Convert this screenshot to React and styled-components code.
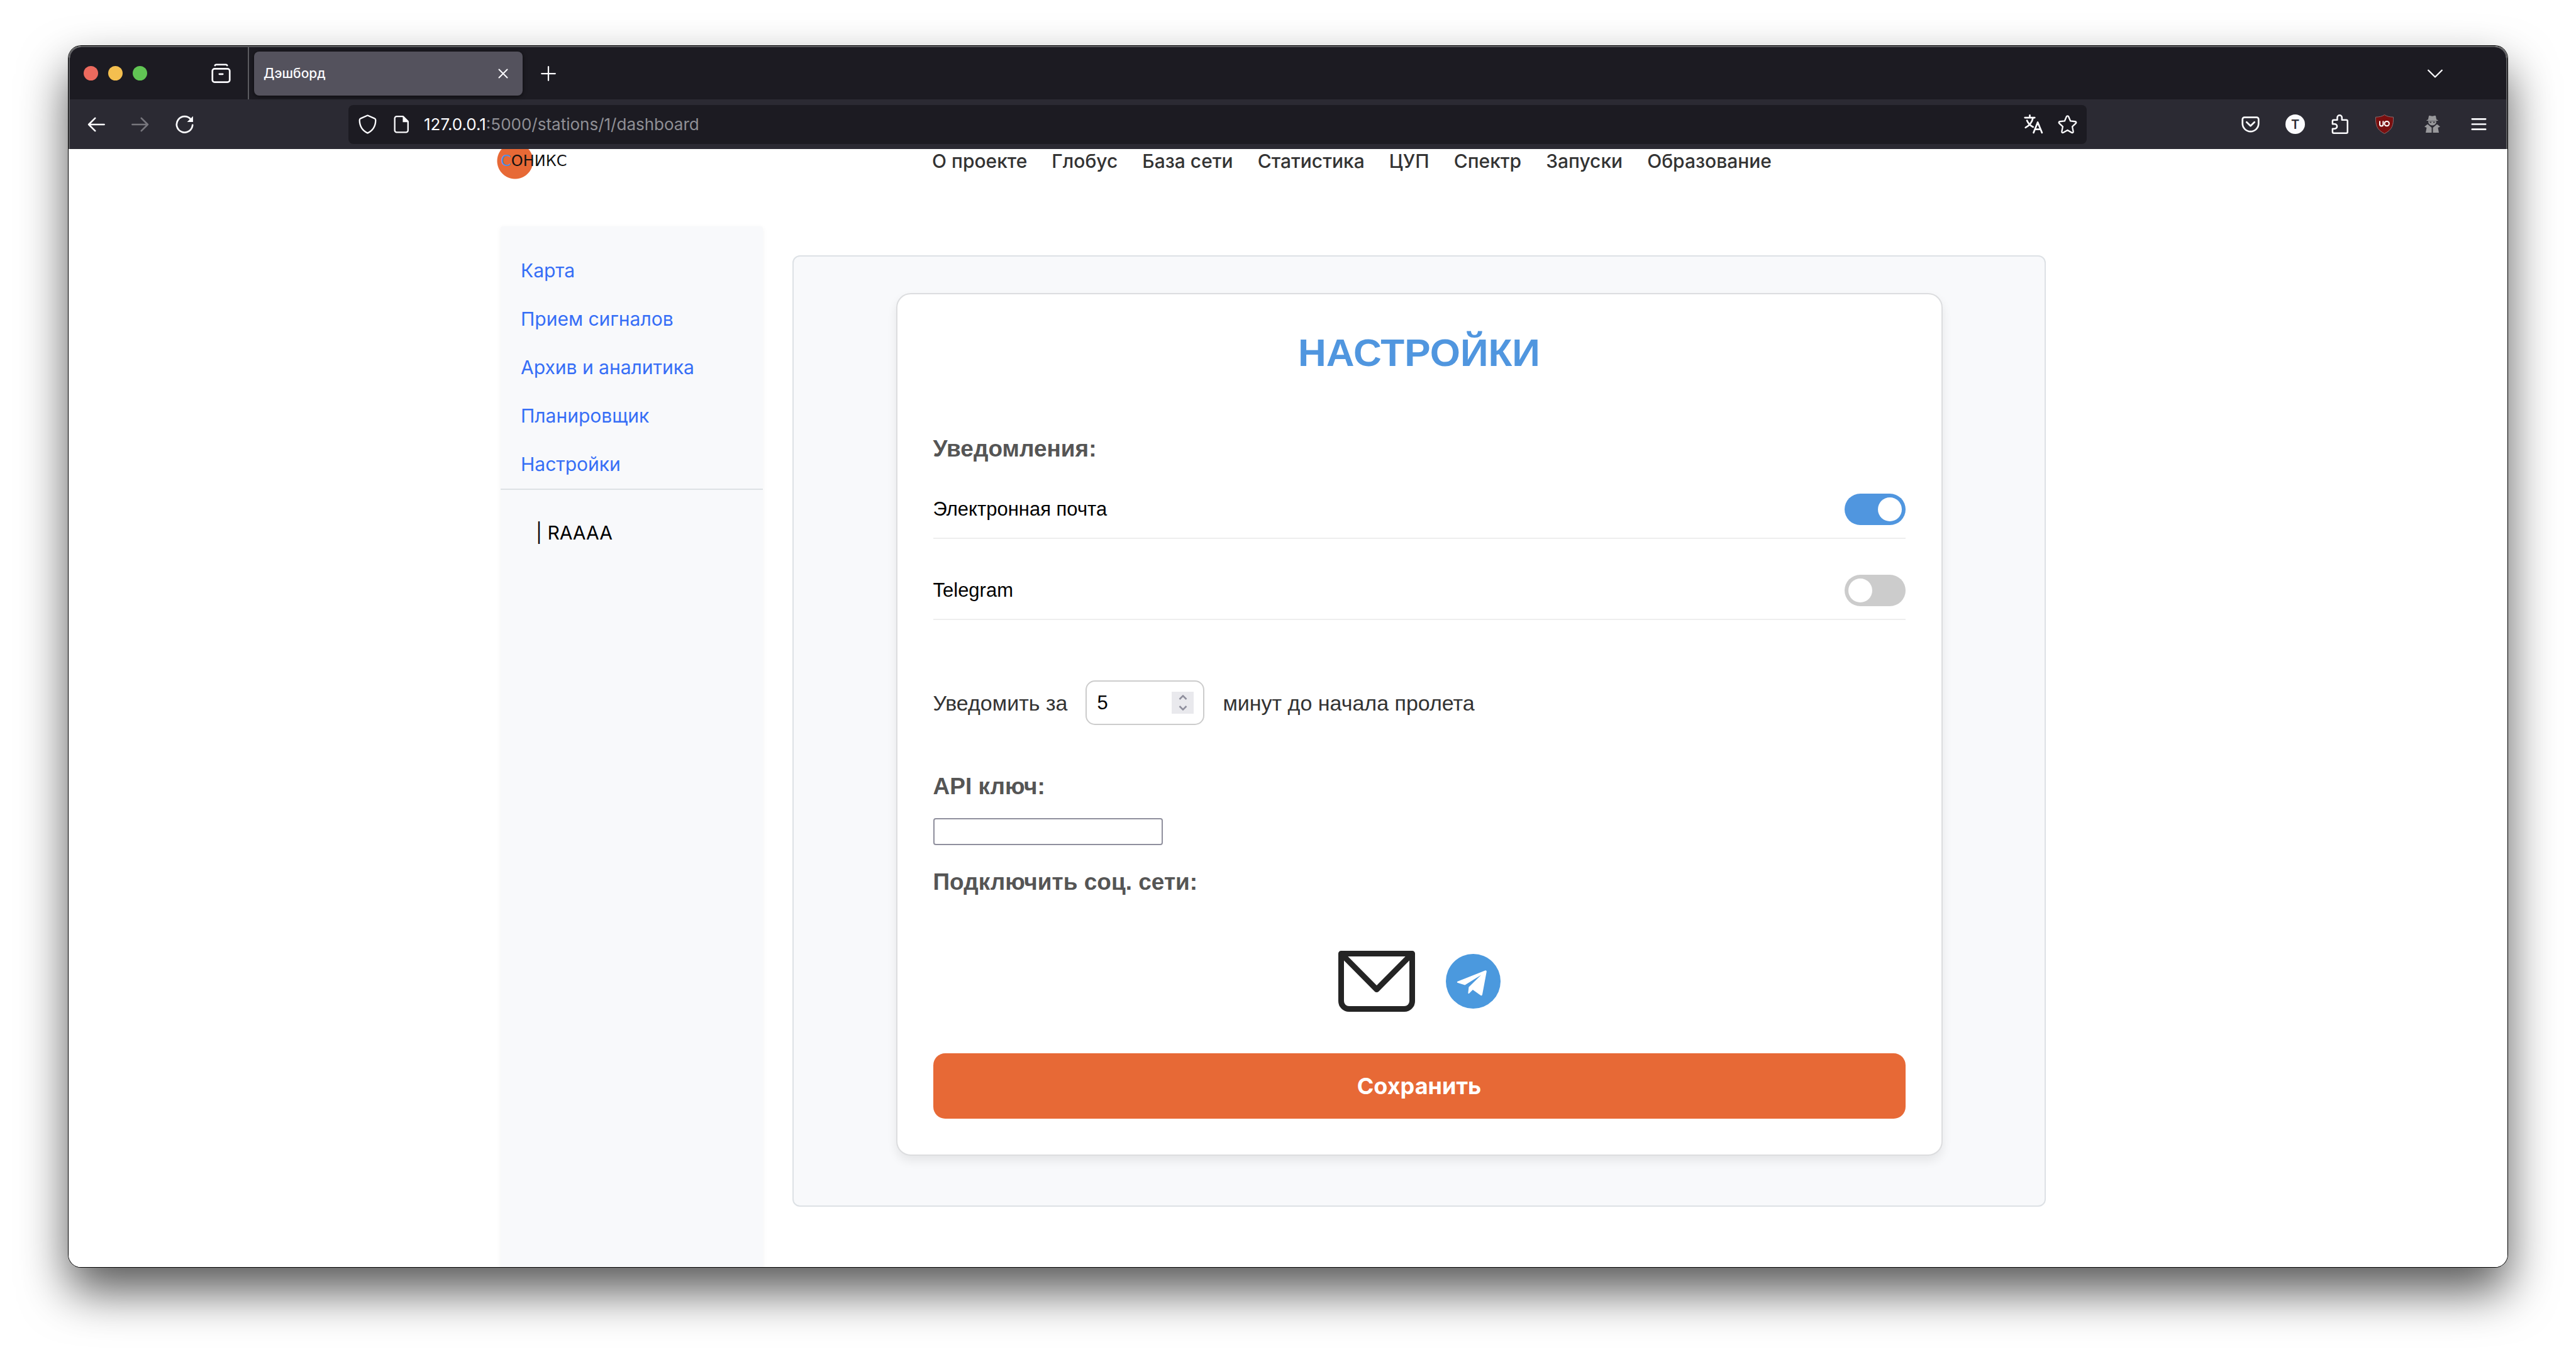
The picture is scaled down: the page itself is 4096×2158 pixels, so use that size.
import React, { useState } from "react";
import styled, { createGlobalStyle } from "styled-components";

const ui = '"Inter", "Roboto", sans-serif';
const arial = '"Liberation Sans", Arial, sans-serif';

const GlobalStyle = createGlobalStyle`
  *, *::before, *::after { box-sizing: border-box; }
  html, body { margin: 0; background: #fff; }
  body { font-family: ${ui}; }
  button { border: 0; padding: 0; margin: 0; background: none; color: inherit; font: inherit; cursor: pointer; }
  svg { display: block; flex: none; }
  h1, h2, p, ul { margin: 0; padding: 0; }
`;

/* ---------- Desktop and browser window ---------- */

const Desktop = styled.div`
  display: flex;
  height: 100vh;
  padding: 73px 109px 143px;
  overflow: hidden;
`;

const BrowserWindow = styled.div`
  flex: 1;
  display: flex;
  flex-direction: column;
  min-width: 0;
  border-radius: 20px;
  overflow: hidden;
  background: #fff;
  box-shadow: 0 0 0 1px #000, 0 38px 76px rgba(0, 0, 0, 0.66);
`;

const Chrome = styled.header`
  flex: none;
  border: 2px solid #5d5d60;
  border-bottom: 0;
  border-radius: 20px 20px 0 0;
  overflow: hidden;
  color: #fbfbfe;
`;

const TabStrip = styled.div`
  display: flex;
  align-items: center;
  height: 83px;
  padding: 0 101px 0 22px;
  background: #1c1b22;
`;

const Lights = styled.div`
  display: flex;
  gap: 16px;
  margin-right: 102px;
`;

const Light = styled.button`
  width: 23px;
  height: 23px;
  border-radius: 50%;
  background: ${(p) => p.$color};
`;

const Separator = styled.span`
  align-self: stretch;
  width: 2px;
  margin: 0 8px 0 27px;
  background: #5b5b60;
`;

const Tab = styled.div`
  display: flex;
  align-items: center;
  justify-content: space-between;
  width: 427px;
  height: 70px;
  margin-right: 29px;
  padding: 0 23px 0 15px;
  border-radius: 8px;
  background: #54525d;
  box-shadow: 0 1px 6px rgba(0, 0, 0, 0.6);
  font-size: 21px;
  font-weight: 500;
  line-height: 28px;
`;

const Spacer = styled.span`
  flex: 1;
`;

const Toolbar = styled.div`
  display: flex;
  align-items: center;
  height: 79px;
  padding: 0 28px;
  background: #2b2a33;
`;

const IconRow = styled.div`
  display: flex;
  align-items: center;
  gap: ${(p) => p.$gap}px;
  margin-left: ${(p) => p.$before || 0}px;
`;

const IconButton = styled.button`
  color: ${(p) => (p.$muted ? "#77767d" : "#fbfbfe")};
`;

const AddressBar = styled.div`
  flex: 1;
  display: flex;
  align-items: center;
  height: 62px;
  margin: 0 0 0 246px;
  padding: 0 15px;
  border-radius: 8px;
  background: #1c1b22;
`;

const Address = styled.span`
  flex: 1;
  margin-left: 20px;
  font-size: 26px;
  line-height: 40px;
  color: #8f8f95;
`;

const Host = styled.span`
  color: #fbfbfe;
`;

/* ---------- Site ---------- */

const Page = styled.div`
  flex: 1;
  display: flex;
  flex-direction: column;
  min-height: 0;
  overflow: hidden;
  background: #fff;
`;

const SiteHeader = styled.div`
  flex: none;
  display: flex;
  align-items: center;
  width: 100%;
  max-width: 2516px;
  height: 58px;
  margin: -10px auto 75px;
`;

const Logo = styled.a`
  display: flex;
  align-items: center;
  width: 692px;
  height: 58px;
  padding-left: 6px;
  background: radial-gradient(circle 29px at 29px 29px, #e76936 28px, transparent 29px);
  color: #111;
  font: 24px/28px "DejaVu Sans", sans-serif;
  text-decoration: none;
`;

const LogoAccent = styled.span`
  color: #4a90e8;
`;

const SiteNav = styled.nav`
  display: flex;
  gap: 39px;
`;

const NavLink = styled.a`
  color: #333;
  font-size: 30px;
  font-weight: 500;
  line-height: 40px;
  text-decoration: none;
  white-space: nowrap;
`;

const Columns = styled.div`
  flex: 1;
  display: flex;
  align-items: flex-start;
  gap: 47px;
  width: 100%;
  max-width: 2504px;
  min-height: 0;
  margin: 0 auto;
  padding-right: 47px;
`;

const Sidebar = styled.aside`
  align-self: stretch;
  flex: none;
  width: 417px;
  padding-top: 32px;
  border-radius: 4px 4px 0 0;
  background: #f8f9fb;
  box-shadow: 0 2px 8px rgba(0, 0, 0, 0.05);
`;

const SideLink = styled.a`
  display: block;
  padding: 0 32px;
  color: #366ef6;
  font-size: 30px;
  line-height: 77px;
  text-decoration: none;
`;

const SideNav = styled.nav`
  border-bottom: 2px solid #dde1e5;
`;

const Station = styled.p`
  margin-top: 30px;
  padding-left: 56px;
  color: #000;
  font-size: 30px;
  line-height: 77px;
`;

const Panel = styled.main`
  flex: 1;
  margin-top: 46px;
  padding: 58px 58px 79px;
  border: 2px solid #dde1e5;
  border-radius: 12px;
  background: #f8f9fb;
`;

const Card = styled.form`
  display: flex;
  flex-direction: column;
  max-width: 1664px;
  margin: 0 auto;
  padding: 57px;
  border: 2px solid #dcdddf;
  border-radius: 23px;
  background: #fff;
  box-shadow: 0 8px 16px rgba(0, 0, 0, 0.08);
  font-family: ${arial};
`;

const Title = styled.h1`
  margin-bottom: 95px;
  color: #5096df;
  font-size: 62px;
  line-height: 72px;
  text-align: center;
`;

const Heading = styled.h2`
  margin-bottom: ${(p) => p.$after}px;
  color: #555;
  font-size: 37px;
  line-height: 44px;
`;

const ToggleList = styled.div`
  display: flex;
  flex-direction: column;
  gap: 37px;
  margin-bottom: 96px;
`;

const ToggleRow = styled.label`
  display: flex;
  align-items: center;
  justify-content: space-between;
  padding: 20px 0;
  border-bottom: 2px solid #eee;
  color: #000;
  font-size: 31px;
  line-height: 36px;
`;

const Toggle = styled.input.attrs({ type: "checkbox" })`
  appearance: none;
  display: flex;
  width: 97px;
  height: 50px;
  margin: 0;
  padding: 6px;
  border-radius: 25px;
  background: #ccc;
  cursor: pointer;

  &::before {
    content: "";
    width: 38px;
    height: 38px;
    border-radius: 50%;
    background: #fff;
  }

  &:checked {
    justify-content: flex-end;
    background: #5096df;
  }
`;

const NoticeRow = styled.div`
  display: flex;
  align-items: center;
  gap: 29px;
  margin-bottom: 76px;
  color: #333;
  font-size: 34px;
  line-height: 40px;
`;

const NumberBox = styled.span`
  display: flex;
  align-items: center;
  justify-content: space-between;
  width: 189px;
  height: 71px;
  padding: 0 15px 0 16px;
  border: 2px solid #ccc;
  border-radius: 15px;
`;

const NumberInput = styled.input.attrs({ type: "number" })`
  appearance: textfield;
  flex: 1;
  min-width: 0;
  padding: 0;
  border: 0;
  outline: 0;
  background: none;
  color: #000;
  font: 31px/36px ${arial};

  &::-webkit-inner-spin-button,
  &::-webkit-outer-spin-button {
    appearance: none;
    margin: 0;
  }
`;

const Stepper = styled.span`
  display: flex;
  flex-direction: column;
  width: 35px;
  height: 35px;
  background: #e9e9ed;
`;

const Step = styled.button`
  flex: 1;
  display: grid;
  place-items: center;
  color: #8f8f9d;
`;

const KeyInput = styled.input.attrs({ type: "text" })`
  width: 365px;
  height: 43px;
  margin-bottom: 37px;
  padding: 2px 6px;
  border: 2px solid #8f8f9d;
  border-radius: 4px;
  background: #fff;
  font: 26px/32px ${arial};
`;

const Socials = styled.div`
  display: flex;
  align-items: center;
  justify-content: center;
  gap: 49px;
  margin-bottom: 66px;
`;

const SaveButton = styled.button`
  height: 104px;
  border-radius: 19px;
  background: #e76936;
  color: #fff;
  font: 700 36px/44px ${ui};
`;

/* ---------- Icons ---------- */

const Icon = ({ size = 31, width = 1.2, box = "0 0 16 16", children }) => (
  <svg
    width={size}
    height={size}
    viewBox={box}
    fill="none"
    stroke="currentColor"
    strokeWidth={width}
    strokeLinecap="round"
    strokeLinejoin="round"
    aria-hidden="true"
  >
    {children}
  </svg>
);

const ArchiveIcon = () => (
  <Icon width={1.4}>
    <rect x="0.9" y="4.3" width="14.2" height="11" rx="1.8" />
    <path d="M3 1.6c.2-.5.5-.7 1-.7h8c.5 0 .8.2 1 .7M6.6 8.7h2.8" />
  </Icon>
);
const CloseIcon = () => (
  <Icon size={16} width={2}><path d="M1.5 1.5l13 13M14.5 1.5l-13 13" /></Icon>
);
const PlusIcon = () => (
  <Icon size={24} width={1.5}><path d="M8 .8v14.4M.8 8h14.4" /></Icon>
);
const ChevronIcon = () => (
  <Icon size={24} width={1.5}><path d="M.8 4.5L8 11.7l7.2-7.2" /></Icon>
);
const BackIcon = () => (
  <Icon size={28} width={1.5}><path d="M15.2 8H1.2M7 2.2L1.2 8 7 13.8" /></Icon>
);
const ForwardIcon = () => (
  <Icon size={28} width={1.5}><path d="M.8 8h14M9 2.2L14.8 8 9 13.8" /></Icon>
);
const ReloadIcon = () => (
  <Icon size={29} width={1.5}>
    <path d="M13.6 4A7 7 0 1 0 15 8.8" />
    <path d="M15.4.9v5.2h-5.2z" fill="currentColor" stroke="none" />
  </Icon>
);
const ShieldIcon = () => (
  <Icon>
    <path d="M8 .8l5.7 2.5c.5.2.9.7.9 1.3C14.6 9 12.6 13 8 15.3 3.4 13 1.4 9 1.4 4.6c0-.6.4-1.1.9-1.3z" />
  </Icon>
);
const DocIcon = () => (
  <Icon>
    <path d="M4 1.6h5.2L13.3 5.7v7.3a1.6 1.6 0 0 1-1.6 1.6H4A1.6 1.6 0 0 1 2.4 13V3.2A1.6 1.6 0 0 1 4 1.6z" />
    <path d="M9 1.4v4.9h4.7z" fill="currentColor" stroke="none" />
  </Icon>
);
const TranslateIcon = () => (
  <Icon width={1.4}>
    <path d="M.9 2.6h8M4.9.7v1.9M7.5 2.8C6.8 6.2 4.7 9 1.4 10.8M2.6 5c1 2.3 2.7 4.1 5 5.3M8 15l3.4-8.6L14.9 15M9.2 12.2h4.5" />
  </Icon>
);
const StarIcon = () => (
  <Icon>
    <path d="M8 1.2c.4 0 .7.2.8.5l1.6 3.7 3.9.4c.8.1 1.1 1 .5 1.5l-2.9 2.7.8 4c.2.8-.6 1.3-1.3.9L8 12.9l-3.4 2c-.7.4-1.5-.1-1.3-.9l.8-4-2.9-2.7c-.6-.5-.3-1.4.5-1.5l3.9-.4 1.6-3.7c.1-.3.4-.5.8-.5z" />
  </Icon>
);
const PocketIcon = () => (
  <Icon width={1.4}>
    <path d="M3 2.4h10a1.6 1.6 0 0 1 1.6 1.6v3.4a6.6 6.6 0 0 1-13.2 0V4A1.6 1.6 0 0 1 3 2.4z" />
    <path d="M4.8 6.3L8 9.4l3.2-3.1" />
  </Icon>
);
const AccountIcon = () => (
  <svg width="31" height="31" viewBox="0 0 31 31" aria-hidden="true">
    <circle cx="15.5" cy="15.5" r="15.5" fill="#fbfbfe" />
    <text x="15.5" y="23" textAnchor="middle" fontFamily="Inter, sans-serif" fontWeight="600" fontSize="20" fill="#2b2a33">T</text>
  </svg>
);
const PuzzleIcon = () => (
  <Icon width={1.3}>
    <path d="M5.9 4.5V2.6a1.9 1.9 0 0 1 3.8 0v1.9h3.6c.6 0 1 .4 1 1v8.8c0 .6-.4 1-1 1H3c-.6 0-1-.4-1-1v-2.6h1.8a1.9 1.9 0 0 0 0-3.8H2V5.5c0-.6.4-1 1-1z" />
  </Icon>
);
const UblockIcon = () => (
  <svg width="31" height="31" viewBox="0 0 31 31" aria-hidden="true">
    <path d="M15.5.5c3.5 2.5 8 3.6 14 3.7.4 12.5-1.5 20-14 26.3C3 24.2 1.1 16.7 1.5 4.2c6-.1 10.5-1.2 14-3.7z" fill="#7a0f0f" stroke="#8d6a6c" strokeWidth="1" />
    <path d="M8 10.5v5.2a2.7 2.7 0 0 0 5.4 0v-5.200" fill="none" stroke="#fff" strokeWidth="2" />
    <circle cx="19.200" cy="14.600" r="3.700" fill="none" stroke="#fff" strokeWidth="2" />
  </svg>
);
const SpyIcon = () => (
  <svg width="31" height="31" viewBox="0 0 31 31" fill="#98989b" aria-hidden="true">
    <path d="M10 2.5c1.2-1.6 2.5.3 5.5.3s4.3-1.9 5.5-.3l1.2 5.700c1.600.4 2.600 1 2.600 1.700H6.200c0-.7 1-1.300 2.600-1.700z" />
    <path d="M9 10.5h13c0 4-2.500 7-6.500 7S9 14.500 9 10.500z" />
    <path d="M11.5 12.500h2.600M16.900 12.500h2.600" stroke="#2b2a33" strokeWidth="1.3" />
    <path d="M8 15.500l6.500 5.500v8H5l1.500-8-3.500-1.500zM23 15.500L16.500 21v8H26l-1.500-8 3.500-1.500z" />
  </svg>
);
const MenuIcon = () => (
  <Icon width={1.4}><path d="M2.5 3.8h11M2.5 8h11M2.5 12.2h11" /></Icon>
);
const MailIcon = () => (
  <svg width="122" height="97" viewBox="0 0 122 97" fill="none" stroke="#242424" strokeWidth="9" strokeLinejoin="round" aria-hidden="true">
    <path d="M4.5 4.5h113V80a12.5 12.5 0 0 1-12.5 12.5H17A12.5 12.5 0 0 1 4.5 80z" />
    <path d="M6 6l55 55.5L116 6" />
  </svg>
);
const TelegramIcon = () => (
  <svg width="87" height="87" viewBox="0 0 270 270" aria-hidden="true">
    <circle cx="135" cy="135" r="135" fill="#4b99de" />
    <path d="M58 136L193 82c5-2 9 1 8 6l-21 112c-1 6-5 7-9 4l-38-27-18 18c-3 3-6 1-5-3l3-28 61-60-80 50-35-11c-5-2-5-5-1-7z" fill="#fff" />
  </svg>
);
const Arrow = ({ down }) => (
  <svg width="14" height="8" viewBox="0 0 14 8" fill="none" stroke="currentColor" strokeWidth="2.5" aria-hidden="true">
    <path d={down ? "M1.5 1L7 6.500 12.500 1" : "M1.5 7L7 1.500 12.500 7"} />
  </svg>
);

/* ---------- Content ---------- */

const navItems = ["О проекте", "Глобус", "База сети", "Статистика", "ЦУП", "Спектр", "Запуски", "Образование"];
const sideItems = ["Карта", "Прием сигналов", "Архив и аналитика", "Планировщик", "Настройки"];

function BrowserChrome() {
  return (
    <Chrome>
      <TabStrip>
        <Lights>
          <Light $color="#ec6a5e" aria-label="Закрыть окно" />
          <Light $color="#f4bf4f" aria-label="Свернуть" />
          <Light $color="#61c554" aria-label="Развернуть" />
        </Lights>
        <IconButton aria-label="Недавние"><ArchiveIcon /></IconButton>
        <Separator />
        <Tab>
          <span>Дэшборд</span>
          <IconButton aria-label="Закрыть вкладку"><CloseIcon /></IconButton>
        </Tab>
        <IconButton aria-label="Новая вкладка"><PlusIcon /></IconButton>
        <Spacer />
        <IconButton aria-label="Список вкладок"><ChevronIcon /></IconButton>
      </TabStrip>
      <Toolbar>
        <IconRow $gap={42}>
          <IconButton aria-label="Назад"><BackIcon /></IconButton>
          <IconButton $muted aria-label="Вперёд"><ForwardIcon /></IconButton>
          <IconButton aria-label="Обновить"><ReloadIcon /></IconButton>
        </IconRow>
        <AddressBar>
          <IconRow $gap={23}>
            <ShieldIcon />
            <DocIcon />
          </IconRow>
          <Address><Host>127.0.0.1</Host>:5000/stations/1/dashboard</Address>
          <IconRow $gap={23}>
            <IconButton aria-label="Перевести"><TranslateIcon /></IconButton>
            <IconButton aria-label="В закладки"><StarIcon /></IconButton>
          </IconRow>
        </AddressBar>
        <IconRow $gap={40} $before={245}>
          <IconButton aria-label="Pocket"><PocketIcon /></IconButton>
          <IconButton aria-label="Аккаунт"><AccountIcon /></IconButton>
          <IconButton aria-label="Расширения"><PuzzleIcon /></IconButton>
          <IconButton aria-label="uBlock"><UblockIcon /></IconButton>
        </IconRow>
        <IconRow $gap={43} $before={45}>
          <IconButton aria-label="Приватность"><SpyIcon /></IconButton>
          <IconButton aria-label="Меню"><MenuIcon /></IconButton>
        </IconRow>
      </Toolbar>
    </Chrome>
  );
}

function SettingsForm() {
  const [email, setEmail] = useState(true);
  const [telegram, setTelegram] = useState(false);
  const [minutes, setMinutes] = useState(5);

  return (
    <Card onSubmit={(e) => e.preventDefault()}>
      <Title>НАСТРОЙКИ</Title>
      <Heading $after={29}>Уведомления:</Heading>
      <ToggleList>
        <ToggleRow>
          Электронная почта
          <Toggle checked={email} onChange={(e) => setEmail(e.target.checked)} />
        </ToggleRow>
        <ToggleRow>
          Telegram
          <Toggle checked={telegram} onChange={(e) => setTelegram(e.target.checked)} />
        </ToggleRow>
      </ToggleList>
      <NoticeRow>
        <label htmlFor="minutes">Уведомить за</label>
        <NumberBox>
          <NumberInput id="minutes" value={minutes} onChange={(e) => setMinutes(e.target.value)} />
          <Stepper>
            <Step type="button" aria-label="Больше" onClick={() => setMinutes(Number(minutes) + 1)}><Arrow /></Step>
            <Step type="button" aria-label="Меньше" onClick={() => setMinutes(Number(minutes) - 1)}><Arrow down /></Step>
          </Stepper>
        </NumberBox>
        <span>минут до начала пролета</span>
      </NoticeRow>
      <Heading $after={28}><label htmlFor="api-key">API ключ:</label></Heading>
      <KeyInput id="api-key" />
      <Heading $after={87}>Подключить соц. сети:</Heading>
      <Socials>
        <a href="#mail" aria-label="Почта"><MailIcon /></a>
        <a href="#telegram" aria-label="Telegram"><TelegramIcon /></a>
      </Socials>
      <SaveButton type="submit">Сохранить</SaveButton>
    </Card>
  );
}

export default function App() {
  return (
    <>
      <GlobalStyle />
      <Desktop>
        <BrowserWindow>
          <BrowserChrome />
          <Page>
            <SiteHeader>
              <Logo href="#home"><LogoAccent>С</LogoAccent>ОНИКС</Logo>
              <SiteNav>
                {navItems.map((item) => <NavLink key={item} href="#nav">{item}</NavLink>)}
              </SiteNav>
            </SiteHeader>
            <Columns>
              <Sidebar>
                <SideNav>
                  {sideItems.map((item) => <SideLink key={item} href="#side">{item}</SideLink>)}
                </SideNav>
                <Station>| RAAAA</Station>
              </Sidebar>
              <Panel>
                <SettingsForm />
              </Panel>
            </Columns>
          </Page>
        </BrowserWindow>
      </Desktop>
    </>
  );
}
